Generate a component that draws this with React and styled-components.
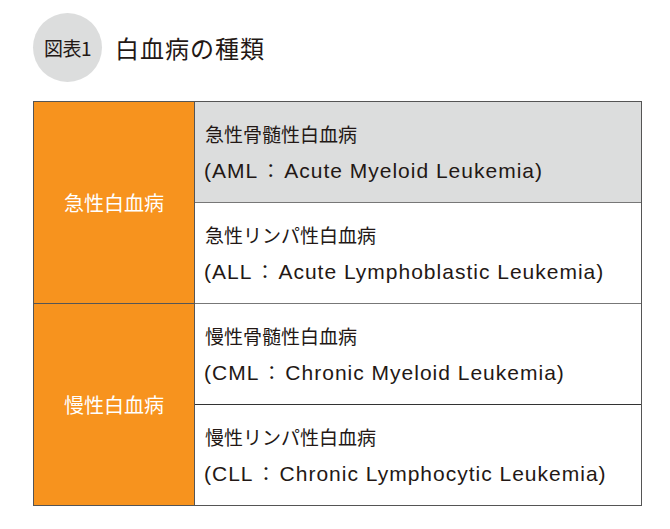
import styled, { createGlobalStyle } from "styled-components";

const GlobalStyle = createGlobalStyle`
  html, body {
    margin: 0;
    padding: 0;
    background: #fff;
  }
  body {
    font-family: "Noto Sans CJK JP", "Noto Sans", sans-serif;
    color: #231815;
  }
`;

const Page = styled.div`
  width: 670px;
  height: 529px;
  padding: 13px 0 0 33px;
  box-sizing: border-box;
`;

const Header = styled.div`
  display: flex;
  align-items: center;
  gap: 13px;
  height: 69px;
`;

const Badge = styled.div`
  width: 69px;
  height: 69px;
  border-radius: 50%;
  background: #dcdddd;
  display: flex;
  align-items: center;
  justify-content: center;
  font-size: 19px;
  letter-spacing: -0.5px;
`;

const Title = styled.h1`
  margin: 0;
  font-size: 24px;
  font-weight: 400;
  letter-spacing: 1px;
`;

const Table = styled.div`
  margin-top: 19px;
  width: 609px;
  display: grid;
  grid-template-columns: 161px 1fr;
  border: 1px solid #555;
  box-sizing: border-box;
`;

const Group = styled.div`
  display: contents;
`;

const Category = styled.div`
  grid-row: span 2;
  background: #f7931e;
  color: #fff;
  font-size: 20px;
  display: flex;
  align-items: center;
  justify-content: center;
  border-right: 1px solid #555;
  border-top: ${(p) => (p.$first ? "none" : "1px solid #555")};
`;

const Cell = styled.div`
  height: 100px;
  background: ${(p) => (p.$shaded ? "#dcdddd" : "#fff")};
  border-top: ${(p) => (p.$first ? "none" : p.$dark ? "1px solid #333" : "1px solid #777")};
  box-sizing: content-box;
  display: flex;
  flex-direction: column;
  justify-content: center;
  padding-left: 10px;
  font-size: 19px;
  line-height: 36px;
`;

const Abbr = styled.div`
  font-family: "Liberation Sans", "Noto Sans CJK JP", sans-serif;
  font-size: 21px;
  letter-spacing: 1px;
  margin-left: -1px;
`;

const Colon = styled.span`
  font-family: "Noto Sans CJK JP", sans-serif;
  font-size: 19px;
  margin: 0 3px;
`;

const groups = [
  {
    name: "急性白血病",
    items: [
      { jp: "急性骨髄性白血病", code: "AML", en: "Acute Myeloid Leukemia", shaded: true },
      { jp: "急性リンパ性白血病", code: "ALL", en: "Acute Lymphoblastic Leukemia" },
    ],
  },
  {
    name: "慢性白血病",
    items: [
      { jp: "慢性骨髄性白血病", code: "CML", en: "Chronic Myeloid Leukemia" },
      { jp: "慢性リンパ性白血病", code: "CLL", en: "Chronic Lymphocytic Leukemia", dark: true },
    ],
  },
];

export default function App() {
  return (
    <>
      <GlobalStyle />
      <Page>
        <Header>
          <Badge>図表1</Badge>
          <Title>白血病の種類</Title>
        </Header>
        <Table>
          {groups.map((g, gi) => (
            <Group key={g.name}>
              <Category $first={gi === 0}>{g.name}</Category>
              {g.items.map((it, ii) => (
                <Cell
                  key={it.jp}
                  $shaded={it.shaded}
                  $dark={it.dark}
                  $first={gi === 0 && ii === 0}
                >
                  <div>{it.jp}</div>
                  <Abbr>
                    ({it.code}
                    <Colon>：</Colon>
                    {it.en})
                  </Abbr>
                </Cell>
              ))}
            </Group>
          ))}
        </Table>
      </Page>
    </>
  );
}
